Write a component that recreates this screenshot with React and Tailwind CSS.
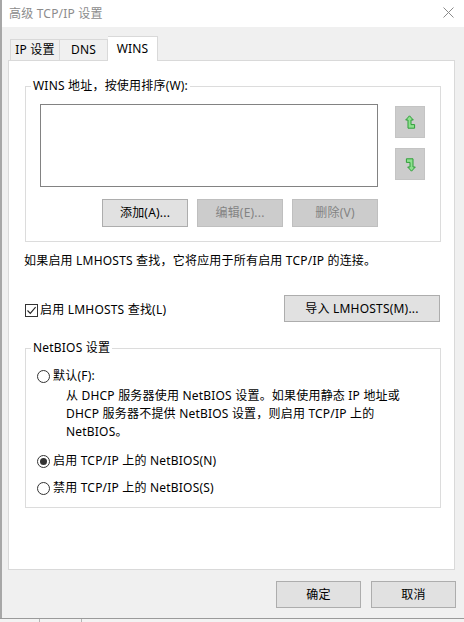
import React from 'react';

const font = { fontFamily: '"Noto Sans", "Noto Sans CJK SC", sans-serif' };

function Btn({ children, disabled, className = '' }) {
    return (
        <div
            className={`flex items-center justify-center border text-[12px] leading-none ${
                disabled
                    ? 'bg-[#cccccc] border-[#bfbfbf] text-[#838383]'
                    : 'bg-[#e1e1e1] border-[#adadad] text-black'
            } ${className}`}
        >
            {children}
        </div>
    );
}

function TurnArrow({ down }) {
    return (
        <svg width="11" height="15" viewBox="0 0 11 15" className={down ? 'rotate-180' : ''}>
            <polygon
                points="4.5,0.8 8.3,5 6,5 6,9.6 9.6,9.6 9.6,13.2 3,13.2 3,5 0.7,5"
                fill="#8ee08e"
                stroke="#2f9e3a"
                strokeWidth="1"
                strokeLinejoin="round"
            />
        </svg>
    );
}

function Radio({ checked }) {
    return (
        <div className="w-[13px] h-[13px] rounded-full border border-[#333333] bg-white flex items-center justify-center shrink-0">
            {checked && <div className="w-[7px] h-[7px] rounded-full bg-[#333333]" />}
        </div>
    );
}

export default function App() {
    return (
        <div className="w-[464px] h-[622px] overflow-hidden bg-[#f0f0f0] flex flex-col text-black tracking-[0.2px]" style={font}>
            <div className="h-[618px] border-l-2 border-[#a7a7a7] flex flex-col shrink-0">
                {/* title bar */}
                <div className="h-[27px] bg-white flex items-center justify-between pl-[7px] pr-[10px]">
                    <span className="text-[12px] text-[#8c8c8c]">高级 TCP/IP 设置</span>
                    <svg width="11" height="11" viewBox="0 0 11 11" className="mb-[2px]">
                        <path d="M0.5 0.5 L10.5 10.5 M10.5 0.5 L0.5 10.5" stroke="#8a8a8a" strokeWidth="1" />
                    </svg>
                </div>

                {/* tabs */}
                <div className="mt-[9px] ml-[8px] flex items-end h-[24px] text-[12px]">
                    <div className="w-[50px] h-[21px] border border-b-0 border-[#d9d9d9] flex items-center justify-center">IP 设置</div>
                    <div className="w-[48px] h-[21px] border border-l-0 border-b-0 border-[#d9d9d9] flex items-center justify-center">DNS</div>
                    <div className="w-[50px] h-[25px] -mb-[1px] border border-l-0 border-b-0 border-[#d9d9d9] bg-white flex items-center justify-center relative">WINS</div>
                </div>

                {/* tab panel */}
                <div className="ml-[6px] w-[447px] h-[510px] border border-[#d9d9d9] bg-white text-[12px]">
                    <fieldset className="ml-[16px] mt-[17px] w-[416px] border border-[#dcdcdc] p-0 m-0 min-w-0">
                        <legend className="ml-[5px] px-[2px] leading-[16px]">WINS 地址，按使用排序(W):</legend>
                        <div className="flex mt-[10px] ml-[14px]">
                            <div className="w-[338px] h-[83px] border border-[#828282] bg-white" />
                            <div className="ml-[17px] mt-[2px] flex flex-col gap-[10px]">
                                <div className="w-[30px] h-[32px] bg-[#cccccc] border border-[#c4c4c4] flex items-center justify-center">
                                    <TurnArrow />
                                </div>
                                <div className="w-[30px] h-[32px] bg-[#cccccc] border border-[#c4c4c4] flex items-center justify-center">
                                    <TurnArrow down />
                                </div>
                            </div>
                        </div>
                        <div className="flex gap-[9px] mt-[12px] ml-[76px] mb-[14px]">
                            <Btn className="w-[86px] h-[28px]">添加(A)...</Btn>
                            <Btn disabled className="w-[86px] h-[28px]">编辑(E)...</Btn>
                            <Btn disabled className="w-[86px] h-[28px]">删除(V)</Btn>
                        </div>
                    </fieldset>

                    <div className="mt-[11px] ml-[15px] leading-[16px]">
                        如果启用 LMHOSTS 查找，它将应用于所有启用 TCP/IP 的连接。
                    </div>

                    <div className="mt-[26px] ml-[16px] w-[415px] h-[27px] flex items-center justify-between">
                        <div className="flex items-center mt-[3px]">
                            <div className="w-[13px] h-[13px] border border-[#333333] bg-white flex items-center justify-center">
                                <svg width="11" height="11" viewBox="0 0 11 11">
                                    <path d="M1.5 5.5 L4.3 8.4 L9.6 2.2" fill="none" stroke="#222222" strokeWidth="1.1" />
                                </svg>
                            </div>
                            <span className="ml-[2px] leading-[16px]">启用 LMHOSTS 查找(L)</span>
                        </div>
                        <Btn className="w-[156px] h-[27px]">导入 LMHOSTS(M)...</Btn>
                    </div>

                    <fieldset className="ml-[16px] mt-[18px] w-[416px] border border-[#dcdcdc] p-0 m-0 min-w-0">
                        <legend className="ml-[5px] px-[2px] leading-[16px]">NetBIOS 设置</legend>
                        <div className="mt-[12px] ml-[11px] flex items-center h-[16px]">
                            <Radio />
                            <span className="ml-[3px]">默认(F):</span>
                        </div>
                        <div className="mt-[3px] ml-[40px] leading-[18px]">
                            从 DHCP 服务器使用 NetBIOS 设置。如果使用静态 IP 地址或
                            <br />
                            DHCP 服务器不提供 NetBIOS 设置，则启用 TCP/IP 上的
                            <br />
                            NetBIOS。
                        </div>
                        <div className="mt-[12px] ml-[11px] flex items-center h-[16px]">
                            <Radio checked />
                            <span className="ml-[3px]">启用 TCP/IP 上的 NetBIOS(N)</span>
                        </div>
                        <div className="mt-[11px] ml-[11px] mb-[11px] flex items-center h-[16px]">
                            <Radio />
                            <span className="ml-[3px]">禁用 TCP/IP 上的 NetBIOS(S)</span>
                        </div>
                    </fieldset>
                </div>

                {/* dialog buttons */}
                <div className="mt-[11px] pr-[8px] flex justify-end gap-[10px]">
                    <Btn className="w-[85px] h-[27px]">确定</Btn>
                    <Btn className="w-[85px] h-[27px]">取消</Btn>
                </div>
            </div>

            {/* window behind */}
            <div className="h-[4px] border-t border-[#9a9a9a] bg-[#f3f3f3] flex">
                <div className="w-[40px] border-r border-[#b5b5b5]" />
                <div className="w-[42px] border-r border-[#b5b5b5]" />
            </div>
        </div>
    );
}
